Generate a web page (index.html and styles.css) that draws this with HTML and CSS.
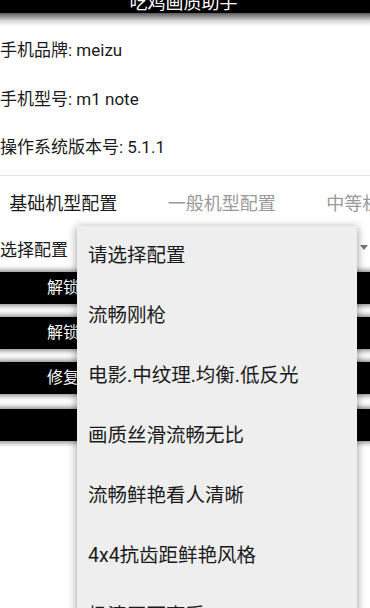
FILE: index.html
```html
<!DOCTYPE html>
<html lang="zh">
<head>
<meta charset="utf-8">
<title>吃鸡画质助手</title>
<link rel="stylesheet" href="styles.css">
</head>
<body>
<div class="app">
  <header class="titlebar"><span class="title-text">吃鸡画质助手</span></header>
  <div class="title-shadow"></div>
  <section class="info">
    <div class="info-row">手机品牌: meizu</div>
    <div class="info-row">手机型号: m1 note</div>
    <div class="info-row">操作系统版本号: 5.1.1</div>
  </section>
  <div class="divider"></div>
  <nav class="tabs">
    <div class="tab active">基础机型配置</div>
    <div class="tab">一般机型配置</div>
    <div class="tab">中等机型配置</div>
  </nav>
  <div class="spinner">
    <span class="spinner-label">选择配置</span>
    <span class="spinner-arrow"></span>
  </div>
  <div class="buttons">
    <div class="btn">解锁极限帧率</div>
    <div class="btn">解锁高清画质</div>
    <div class="btn">修复游戏卡顿</div>
    <div class="btn btn-center">启动游戏</div>
  </div>
  <ul class="dropdown">
    <li class="item">请选择配置</li>
    <li class="item">流畅刚枪</li>
    <li class="item">电影.中纹理.均衡.低反光</li>
    <li class="item">画质丝滑流畅无比</li>
    <li class="item">流畅鲜艳看人清晰</li>
    <li class="item">4x4抗齿距鲜艳风格</li>
    <li class="item">极清画面享受</li>
  </ul>
</div>
</body>
</html>
```
FILE: styles.css
```css
* { box-sizing: border-box; }
html, body {
  margin: 0;
  padding: 0;
  background: #fff;
  overflow: hidden;
}
body {
  font-family: Roboto, "Noto Sans CJK SC", sans-serif;
  color: #1a1a1a;
  width: 370px;
  height: 608px;
}
.app {
  position: relative;
  width: 370px;
  height: 608px;
  overflow: hidden;
}
.titlebar {
  height: 13px;
  background: #000;
  overflow: hidden;
  text-align: center;
}
.title-text {
  display: block;
  color: #fff;
  font-size: 18px;
  line-height: 20px;
  margin-top: -7px;
  padding-right: 3px;
}
.title-shadow {
  height: 13px;
  background: linear-gradient(#5a5a5a, #d8d8d8 60%, #fff);
}
.info {
  padding-top: 0;
}
.info-row {
  height: 48.5px;
  line-height: 48.5px;
  font-size: 17px;
  color: #1a1a1a;
  white-space: nowrap;
}
.divider {
  margin-top: 3.5px;
  height: 1px;
  background: #e4e4e4;
}
.tabs {
  display: flex;
  margin-left: -16px;
  height: 56px;
  overflow: hidden;
}
.tab {
  flex: 0 0 158.5px;
  text-align: center;
  line-height: 56px;
  font-size: 18px;
  color: #9a9a9a;
  white-space: nowrap;
}
.tab.active { color: #1a1a1a; }
.spinner {
  display: flex;
  align-items: center;
  justify-content: space-between;
  height: 32px;
  font-size: 17px;
  color: #1a1a1a;
}
.spinner-arrow {
  width: 0;
  height: 0;
  margin-right: 2px;
  border-left: 4.5px solid transparent;
  border-right: 4.5px solid transparent;
  border-top: 5px solid #777;
  margin-top: -2px;
}
.buttons {
  display: flex;
  flex-direction: column;
  gap: 13px;
  margin-top: 8px;
}
.btn {
  height: 32px;
  background: #000;
  color: #fff;
  font-size: 16px;
  line-height: 32px;
  padding-left: 47px;
  border-radius: 6px;
  margin: 0 -8px 0 -8px;
  padding-left: 55px;
  box-shadow: 0 0 5px 2px rgba(0,0,0,0.45);
  white-space: nowrap;
}
.btn:last-child { margin-top: 2px; }
.btn-center { text-align: center; padding-left: 0; }
.dropdown {
  position: absolute;
  left: 77px;
  top: 226px;
  width: 280px;
  margin: 0;
  padding: 0;
  list-style: none;
  background: #eeeeee;
  box-shadow: 0 2px 8px 1px rgba(0,0,0,0.35);
}
.item {
  height: 60px;
  line-height: 60px;
  padding-left: 11px;
  font-size: 19.5px;
  color: #1a1a1a;
  white-space: nowrap;
}
```
